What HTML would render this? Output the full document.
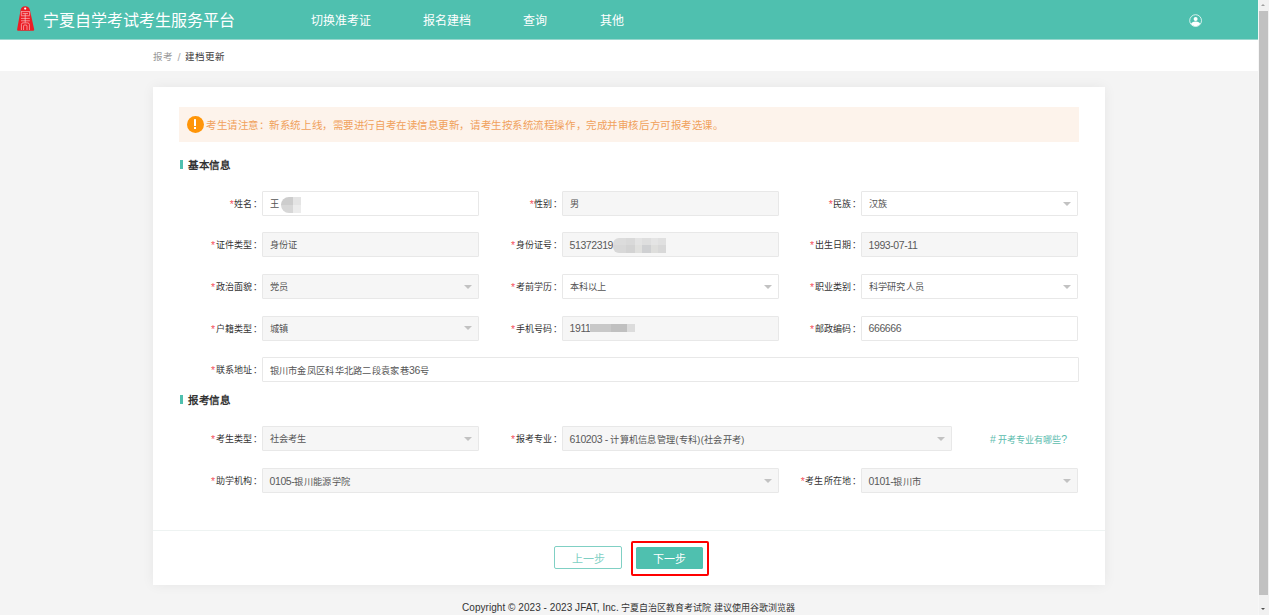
<!DOCTYPE html>
<html lang="zh-CN">
<head>
<meta charset="utf-8">
<style>
*{margin:0;padding:0;box-sizing:border-box;}
html,body{width:1269px;height:615px;overflow:hidden;}
body{font-family:"Liberation Sans",sans-serif;background:#f4f4f4;position:relative;color:#333;}
.abs{position:absolute;}
#hdr{left:0;top:0;width:1258px;height:39px;background:#4fc0af;box-shadow:0 1px 0 rgba(79,192,175,0.55);}
#title{left:43.3px;top:10px;font-size:16px;color:#fff;line-height:22px;white-space:nowrap;}
.nav{top:13px;font-size:12px;color:#fff;line-height:16px;white-space:nowrap;}
#crumb{left:0;top:40px;width:1258px;height:31px;background:#fff;}
#crumbtxt{left:153px;top:50.5px;font-size:9.5px;line-height:12px;color:#999;white-space:nowrap;}
#crumbtxt b{font-weight:normal;color:#333;}
#card{left:153px;top:87px;width:952px;height:498px;background:#fff;box-shadow:0 0 12px rgba(0,0,0,0.06);}
#notice{left:179px;top:107px;width:900px;height:35px;background:#fdf3eb;}
#ntxt{left:206px;top:119px;font-size:10.5px;letter-spacing:0.56px;line-height:13px;color:#f0a15b;white-space:nowrap;}
#nicon{left:187px;top:116px;width:17px;height:17px;border-radius:50%;background:#ff9508;color:#fff;}
.hbar{width:3px;height:9px;background:#4fc0af;}
.htxt{letter-spacing:0.6px;font-size:10.5px;line-height:12px;font-weight:bold;color:#333;white-space:nowrap;}
.lbl{letter-spacing:0.3px;font-size:9px;line-height:12px;color:#333;white-space:nowrap;text-align:right;}
.lbl i{font-style:normal;color:#f5555f;font-size:10.5px;position:relative;top:1px;}
.inp{height:25px;border:1px solid #e8e8e8;background:#fff;border-radius:1px;}
.inp.dis{background:#f6f6f6;}
.val{letter-spacing:0.3px;font-size:9.2px;line-height:12px;color:#555;white-space:nowrap;}
.arr{width:0;height:0;border-left:4px solid transparent;border-right:4px solid transparent;border-top:4.5px solid #c2c2c2;}
#divider{left:153px;top:530px;width:952px;height:1px;background:#eef3f2;}
#btnprev{left:554.3px;top:546.3px;width:67.5px;height:22.3px;border:1px solid #80d0c4;border-radius:2px;color:#80d0c4;font-size:11px;line-height:24.5px;text-align:center;background:#fff;}
#btnnext{left:636px;top:547px;width:67px;height:22px;background:#4fc0af;border-radius:1.5px;color:#fff;font-size:11px;line-height:25px;text-align:center;}
#redbox{left:630.5px;top:541px;width:78.5px;height:34.8px;border:2px solid #ff0000;border-radius:2px;}
#footer{left:462px;top:602px;font-size:9px;line-height:12px;color:#333;white-space:nowrap;}
#sb{left:1258px;top:0;width:11px;height:615px;background:#f1f1f1;border-left:1px solid #f7f7f7;}
#thumb{left:1259px;top:11px;width:8.8px;height:584px;background:#c1c1c1;}
.link{font-size:9px;line-height:12px;color:#5cbcae;white-space:nowrap;}
.link span{font-size:10.5px;}
.blob1{width:20.5px;height:15.6px;border-radius:8px 0 0 8px;overflow:hidden;}
.blob2{width:53.5px;height:14.7px;border-radius:6px 0 0 6px;overflow:hidden;}
.blob3{width:44.7px;height:7.6px;background:linear-gradient(90deg,#c8c8c8 0,#c8c8c8 47%,#c0c0c0 47%,#c0c0c0 82%,#dcdcdc 82%);}
.n{font-size:10.5px;letter-spacing:-0.4px;position:relative;top:-0.5px;color:#5a5a5a;}
.lat{font-size:10px;letter-spacing:0.05px;}
</style>
</head>
<body>
<div id="hdr" class="abs"></div>
<svg class="abs" style="left:14px;top:4px" width="24" height="30" viewBox="0 0 24 30">
  <path d="M6.6 6 Q7.2 2.2 11.2 2.2 Q15.2 2.2 15.9 6 L20.2 25.4 Q20.4 26.7 19 26.7 L4.2 26.7 Q2.8 26.7 3.1 25.4 Z" fill="#ec1c24"/>
  <circle cx="11.2" cy="4.6" r="1.1" fill="#fff"/>
  <g stroke="#fbd2d2" stroke-width="0.65" fill="none">
    <path d="M7 7.6 H15.8 M7.3 7.6 V11.4 M15.6 7.6 V11.4 M8.6 9.6 H14 M7 11.8 H15.8 M11.2 9.6 V18.6 M7 14.4 H15.8 M7 16.8 H15.8"/>
    <path d="M7.4 26 V20.5 Q7.4 18.9 9 18.9 H13.6 Q15.4 18.9 15.4 20.5 V26 M9.6 26 V22 Q9.6 21 10.6 21 H12 Q13 21 13 22 V26"/>
  </g>
</svg>
<div id="title" class="abs">宁夏自学考试考生服务平台</div>
<div class="abs nav" style="left:311px">切换准考证</div>
<div class="abs nav" style="left:423px">报名建档</div>
<div class="abs nav" style="left:523px">查询</div>
<div class="abs nav" style="left:600px">其他</div>
<svg class="abs" style="left:1189px;top:14px" width="14" height="14" viewBox="0 0 14 14">
  <defs><clipPath id="uc"><circle cx="6.6" cy="6.6" r="5.6"/></clipPath></defs>
  <circle cx="6.6" cy="6.6" r="5.9" fill="none" stroke="#fff" stroke-width="0.9" opacity="0.85"/>
  <circle cx="6.6" cy="5" r="2" fill="#fff"/>
  <ellipse cx="6.6" cy="11" rx="5" ry="3.5" fill="#fff" clip-path="url(#uc)"/>
</svg>

<div id="crumb" class="abs"></div>
<div id="crumbtxt" class="abs">报考</div><div class="abs" style="left:177.5px;top:50.5px;font-size:11px;line-height:12px;color:#aaa">/</div><div id="crumbtxt" class="abs" style="left:185px;color:#3a3a3a">建档更新</div>

<div id="card" class="abs"></div>
<div id="notice" class="abs"></div>
<div id="nicon" class="abs"><div class="abs" style="left:6.8px;top:3.4px;width:1.9px;height:6.8px;background:#fff;border-radius:0.6px"></div><div class="abs" style="left:6.8px;top:11.3px;width:1.9px;height:1.7px;background:#fff"></div></div>
<div id="ntxt" class="abs">考生请注意：新系统上线，需要进行自考在读信息更新，请考生按系统流程操作，完成并审核后方可报考选课。</div>

<div class="abs hbar" style="left:179.5px;top:160px"></div>
<div class="abs htxt" style="left:188px;top:158.5px">基本信息</div>

<div class="abs lbl" style="right:1007px;top:197px"><i>*</i>姓名：</div>
<div class="abs inp" style="left:262px;top:191px;width:217px"></div>
<div class="abs val" style="left:269.5px;top:198px">王</div>
<div class="abs blob1" style="left:280.7px;top:197px"><div class="abs" style="left:0;top:0;width:12.3px;height:7.6px;background:#cdcdcd"></div><div class="abs" style="left:0;top:7.6px;width:12.3px;height:8px;background:#d7d7d7"></div><div class="abs" style="left:12.3px;top:0;width:8.2px;height:7.6px;background:#e4e4e4"></div><div class="abs" style="left:12.3px;top:7.6px;width:8.2px;height:8px;background:#ececec"></div></div>
<div class="abs lbl" style="right:707px;top:197px"><i>*</i>性别：</div>
<div class="abs inp dis" style="left:562px;top:191px;width:217px"></div>
<div class="abs val" style="left:569.5px;top:198px">男</div>
<div class="abs lbl" style="right:408px;top:197px"><i>*</i>民族：</div>
<div class="abs inp" style="left:861px;top:191px;width:217px"></div>
<div class="abs val" style="left:868.5px;top:198px">汉族</div>
<div class="abs arr" style="left:1063px;top:201.5px"></div>
<div class="abs lbl" style="right:1007px;top:238.3px"><i>*</i>证件类型：</div>
<div class="abs inp dis" style="left:262px;top:232.3px;width:217px"></div>
<div class="abs val" style="left:269.5px;top:239.3px">身份证</div>
<div class="abs lbl" style="right:707px;top:238.3px"><i>*</i>身份证号：</div>
<div class="abs inp dis" style="left:562px;top:232.3px;width:217px"></div>
<div class="abs val" style="left:569.5px;top:239.3px"><span class=n>51372319</span></div>
<div class="abs blob2" style="left:612.5px;top:238px"><div class="abs" style="left:0px;top:0;width:13.71px;height:7px;background:#dcdcdc"></div><div class="abs" style="left:0px;top:7px;width:13.71px;height:7.7px;background:#d8d8d8"></div><div class="abs" style="left:13.7px;top:0;width:8.51px;height:7px;background:#d9d9d9"></div><div class="abs" style="left:13.7px;top:7px;width:8.51px;height:7.7px;background:#d3d3d3"></div><div class="abs" style="left:22.2px;top:0;width:7.61px;height:7px;background:#e3e3e3"></div><div class="abs" style="left:22.2px;top:7px;width:7.61px;height:7.7px;background:#e0e0de"></div><div class="abs" style="left:29.8px;top:0;width:8.51px;height:7px;background:#dedede"></div><div class="abs" style="left:29.8px;top:7px;width:8.51px;height:7.7px;background:#cfd0d2"></div><div class="abs" style="left:38.3px;top:0;width:7.51px;height:7px;background:#e4e4e4"></div><div class="abs" style="left:38.3px;top:7px;width:7.51px;height:7.7px;background:#dededc"></div><div class="abs" style="left:45.8px;top:0;width:7.71px;height:7px;background:#e0e0e0"></div><div class="abs" style="left:45.8px;top:7px;width:7.71px;height:7.7px;background:#d8d8d8"></div></div>
<div class="abs lbl" style="right:408px;top:238.3px"><i>*</i>出生日期：</div>
<div class="abs inp dis" style="left:861px;top:232.3px;width:217px"></div>
<div class="abs val" style="left:868.5px;top:239.3px"><span class=n>1993-07-11</span></div>
<div class="abs lbl" style="right:1007px;top:280px"><i>*</i>政治面貌：</div>
<div class="abs inp dis" style="left:262px;top:274px;width:217px"></div>
<div class="abs val" style="left:269.5px;top:281px">党员</div>
<div class="abs arr" style="left:464px;top:284.5px"></div>
<div class="abs lbl" style="right:707px;top:280px"><i>*</i>考前学历：</div>
<div class="abs inp" style="left:562px;top:274px;width:217px"></div>
<div class="abs val" style="left:569.5px;top:281px">本科以上</div>
<div class="abs arr" style="left:764px;top:284.5px"></div>
<div class="abs lbl" style="right:408px;top:280px"><i>*</i>职业类别：</div>
<div class="abs inp" style="left:861px;top:274px;width:217px"></div>
<div class="abs val" style="left:868.5px;top:281px">科学研究人员</div>
<div class="abs arr" style="left:1063px;top:284.5px"></div>
<div class="abs lbl" style="right:1007px;top:321.5px"><i>*</i>户籍类型：</div>
<div class="abs inp dis" style="left:262px;top:315.5px;width:217px"></div>
<div class="abs val" style="left:269.5px;top:322.5px">城镇</div>
<div class="abs arr" style="left:464px;top:326.0px"></div>
<div class="abs lbl" style="right:707px;top:321.5px"><i>*</i>手机号码：</div>
<div class="abs inp dis" style="left:562px;top:315.5px;width:217px"></div>
<div class="abs val" style="left:569.5px;top:322.5px"><span class=n>1911</span></div>
<div class="abs blob3" style="left:590px;top:324.3px"></div>
<div class="abs lbl" style="right:408px;top:321.5px"><i>*</i>邮政编码：</div>
<div class="abs inp" style="left:861px;top:315.5px;width:217px"></div>
<div class="abs val" style="left:868.5px;top:322.5px"><span class=n>666666</span></div>
<div class="abs lbl" style="right:1007px;top:363px"><i>*</i>联系地址：</div>
<div class="abs inp" style="left:262px;top:357px;width:817px"></div>
<div class="abs val" style="left:269.5px;top:364px">银川市金凤区科华北路二段袁家巷<span class=n>36</span>号</div>
<div class="abs hbar" style="left:179.5px;top:395px"></div>
<div class="abs htxt" style="left:188px;top:393.5px">报考信息</div>
<div class="abs lbl" style="right:1007px;top:432px"><i>*</i>考生类型：</div>
<div class="abs inp dis" style="left:262px;top:426px;width:217px"></div>
<div class="abs val" style="left:269.5px;top:433px">社会考生</div>
<div class="abs arr" style="left:464px;top:436.5px"></div>
<div class="abs lbl" style="right:707px;top:432px"><i>*</i>报考专业：</div>
<div class="abs inp dis" style="left:562px;top:426px;width:390px"></div>
<div class="abs val" style="left:569.5px;top:433px"><span class=n>610203 - </span>计算机信息管理(专科)(社会开考)</div>
<div class="abs arr" style="left:937px;top:436.5px"></div>
<div class="abs link" style="left:990px;top:433px"><span>#</span> 开考专业有哪些<span>?</span></div>
<div class="abs lbl" style="right:1007px;top:474px"><i>*</i>助学机构：</div>
<div class="abs inp dis" style="left:262px;top:468px;width:517px"></div>
<div class="abs val" style="left:269.5px;top:475px"><span class=n>0105-</span>银川能源学院</div>
<div class="abs arr" style="left:764px;top:478.5px"></div>
<div class="abs lbl" style="right:408px;top:474px"><i>*</i>考生所在地：</div>
<div class="abs inp dis" style="left:861px;top:468px;width:217px"></div>
<div class="abs val" style="left:868.5px;top:475px"><span class=n>0101-</span>银川市</div>
<div class="abs arr" style="left:1063px;top:478.5px"></div>
<div id="divider" class="abs"></div>
<div id="btnprev" class="abs">上一步</div>
<div id="btnnext" class="abs">下一步</div>
<div id="redbox" class="abs"></div>
<div id="footer" class="abs"><span class="lat">Copyright © 2023 - 2023 JFAT, Inc.</span> 宁夏自治区教育考试院 建议使用谷歌浏览器</div>

<div id="sb" class="abs"></div>
<div id="thumb" class="abs"></div>
<div class="abs" style="left:1261.2px;top:4.4px;width:0;height:0;border-left:2.2px solid transparent;border-right:2.2px solid transparent;border-bottom:2.8px solid #a0a0a0"></div>
<div class="abs" style="left:1261px;top:607.5px;width:0;height:0;border-left:2.4px solid transparent;border-right:2.4px solid transparent;border-top:2.8px solid #505050"></div>
</body>
</html>
